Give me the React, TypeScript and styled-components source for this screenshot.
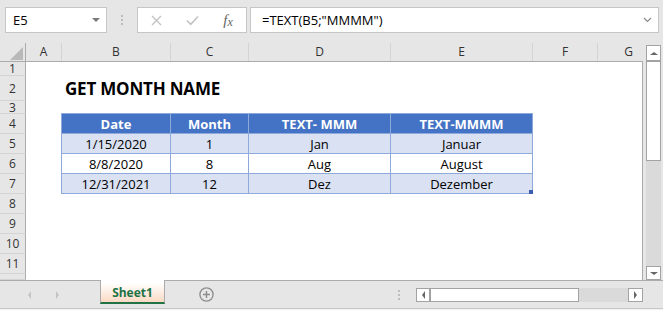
import React from "react";
import styled, { createGlobalStyle } from "styled-components";

const COLS = "26px 36px 109px 78px 142px 142px 65px 62px";
const BORDER = "#ababab";
const HEADER_LINE = "#d4d4d4";
const TABLE_LINE = "#8eaadb";

const GlobalStyle = createGlobalStyle`
  html, body { margin: 0; padding: 0; background: #e6e6e6; }
  body { font-family: "Open Sans", "Liberation Sans", sans-serif; overflow: hidden; }
  * { box-sizing: border-box; }
`;

const Window = styled.div`
  width: 663px;
  height: 310px;
  display: flex;
  flex-direction: column;
  background: #e6e6e6;
  overflow: hidden;
`;

/* ---------- formula bar ---------- */
const FormulaBar = styled.div`
  height: 40px;
  flex: none;
  display: flex;
  align-items: stretch;
  padding: 7px 4px 7px 5px;
`;

const Field = styled.div`
  background: #fff;
  border: 1px solid #c6c6c6;
  display: flex;
  align-items: center;
  font-size: 13px;
  color: #000;
`;

const NameBox = styled(Field)`
  width: 102px;
  padding: 0 6px 0 7px;
  justify-content: space-between;
`;

const DropTriangle = styled.span`
  width: 0;
  height: 0;
  border-left: 4px solid transparent;
  border-right: 4px solid transparent;
  border-top: 4px solid #7a7a7a;
`;

const Divider = styled.div`
  width: 30px;
  display: flex;
  justify-content: center;
  align-items: center;
`;

const DotColumn = styled.div`
  display: flex;
  flex-direction: column;
  gap: 2px;
`;

const Dot = styled.span`
  display: block;
  width: 2px;
  height: 2px;
  background: #bdbdbd;
`;

const FxBox = styled(Field)`
  width: 110px;
  display: grid;
  grid-template-columns: repeat(3, 36px);
  align-items: center;
  justify-items: center;
`;

const Fx = styled.span`
  font-family: "Liberation Serif", serif;
  font-style: italic;
  font-size: 15px;
  color: #666;
  line-height: 1;
`;

const FxSub = styled.span`
  font-size: 12px;
  position: relative;
  top: 1px;
`;

const FormulaInput = styled(Field)`
  flex: 1;
  margin-left: 3px;
  padding: 0 6px 0 11px;
  justify-content: space-between;
`;

/* ---------- sheet ---------- */
const Main = styled.div`
  flex: none;
  height: 240px;
  display: flex;
`;

const Sheet = styled.div`
  width: 643px;
  display: flex;
  flex-direction: column;
  overflow: hidden;
`;

const ColHeaderRow = styled.div`
  flex: none;
  height: 22px;
  padding-top: 3px;
  display: grid;
  grid-template-columns: ${COLS};
  border-bottom: 1px solid ${BORDER};
`;

const CornerCell = styled.div`
  border-right: 1px solid ${BORDER};
  display: flex;
  align-items: flex-end;
  justify-content: flex-end;
  padding: 0 2px 1px 0;
`;

const ColHeaderCell = styled.div`
  border-right: 1px solid ${HEADER_LINE};
  display: flex;
  align-items: center;
  justify-content: center;
  font-size: 12px;
  color: #333;
  line-height: 1;
`;

const Body = styled.div`
  flex: 1;
  display: grid;
  grid-template-columns: ${COLS};
  grid-template-rows: 14px 25px 13px repeat(8, 20px) 6px;
  background: #fff;
  border-right: 1px solid ${BORDER};
  overflow: hidden;
`;

const RowHead = styled.div<{ $row: number }>`
  grid-column: 1;
  grid-row: ${(p) => p.$row};
  background: #e6e6e6;
  border-right: 1px solid ${BORDER};
  border-bottom: 1px solid ${HEADER_LINE};
  display: flex;
  align-items: center;
  justify-content: center;
  font-size: 12px;
  color: #333;
  line-height: 1;
  overflow: hidden;
  padding-top: 1px;
`;

const Title = styled.div`
  grid-column: 3 / span 5;
  grid-row: 2;
  align-self: end;
  padding: 0 0 2px 3px;
  font-weight: 700;
  font-size: 17px;
  line-height: 20px;
  letter-spacing: -0.2px;
  color: #000;
  white-space: nowrap;
`;

const Table = styled.div`
  grid-column: 3 / span 4;
  grid-row: 4 / span 4;
  margin: -1px 0 0 -1px;
  position: relative;
  border-top: 1px solid ${TABLE_LINE};
  border-left: 1px solid ${TABLE_LINE};
  display: grid;
  grid-template-columns: 109px 78px 142px 142px;
  grid-template-rows: repeat(4, 20px);
`;

const TCell = styled.div<{ $kind: "head" | "band" | "plain" }>`
  border-right: 1px solid ${TABLE_LINE};
  border-bottom: 1px solid ${TABLE_LINE};
  display: flex;
  align-items: center;
  justify-content: center;
  padding-top: 1px;
  font-size: 13px;
  line-height: 1;
  white-space: nowrap;
  color: ${(p) => (p.$kind === "head" ? "#fff" : "#000")};
  font-weight: ${(p) => (p.$kind === "head" ? 700 : 400)};
  background: ${(p) =>
    p.$kind === "head" ? "#4472c4" : p.$kind === "band" ? "#d9e1f2" : "#fff"};
`;

const ResizeHandle = styled.span`
  position: absolute;
  right: 0;
  bottom: 0;
  width: 4px;
  height: 4px;
  background: #3b5cb3;
`;

/* ---------- scrollbars ---------- */
const VScroll = styled.div`
  width: 20px;
  padding: 5px 2px 0 3px;
  display: flex;
  flex-direction: column;
`;

const ScrollButton = styled.div<{ $len: number; $horizontal?: boolean }>`
  flex: none;
  ${(p) => (p.$horizontal ? `width: ${p.$len}px;` : `height: ${p.$len}px;`)}
  background: #fff;
  border: 1px solid #a3a3a3;
  display: flex;
  align-items: center;
  justify-content: center;
`;

const Thumb = styled.div<{ $len: number; $horizontal?: boolean }>`
  flex: none;
  ${(p) => (p.$horizontal ? `width: ${p.$len}px;` : `height: ${p.$len}px;`)}
  background: #fff;
  border: 1px solid #a3a3a3;
`;

const Track = styled.div`
  flex: 1;
  background: #dadada;
`;

const Tri = styled.span<{ $dir: "up" | "down" | "left" | "right"; $color: string; $size: number }>`
  width: 0;
  height: 0;
  ${(p) => {
    const s = p.$size;
    const c = p.$color;
    switch (p.$dir) {
      case "up":
        return `border-left:${s}px solid transparent;border-right:${s}px solid transparent;border-bottom:${s - 1}px solid ${c};`;
      case "down":
        return `border-left:${s}px solid transparent;border-right:${s}px solid transparent;border-top:${s - 1}px solid ${c};`;
      case "left":
        return `border-top:${s}px solid transparent;border-bottom:${s}px solid transparent;border-right:${s - 1}px solid ${c};`;
      default:
        return `border-top:${s}px solid transparent;border-bottom:${s}px solid transparent;border-left:${s - 1}px solid ${c};`;
    }
  }}
`;

/* ---------- tab bar ---------- */
const TabBar = styled.div`
  flex: none;
  height: 29px;
  border-top: 1px solid ${BORDER};
  border-bottom: 1px solid #c8c8c8;
  display: flex;
  align-items: center;
`;

const StatusStrip = styled.div`
  flex: none;
  height: 1px;
  background: #f2f2f2;
`;

const NavArrows = styled.div`
  width: 100px;
  padding-left: 15px;
  display: grid;
  grid-template-columns: 28px 28px;
  justify-items: center;
  align-items: center;
`;

const SheetTab = styled.div`
  align-self: flex-start;
  margin-top: -1px;
  width: 65px;
  height: 24px;
  border-left: 1px solid ${BORDER};
  border-right: 1px solid ${BORDER};
  border-bottom: 2px solid #217346;
  background: linear-gradient(to bottom, #ffffff 15%, #fad9c3 100%);
  display: flex;
  align-items: center;
  justify-content: center;
  padding-top: 2px;
  font-size: 12px;
  font-weight: 700;
  color: #217346;
`;

const AddSheet = styled.div`
  margin-left: 34px;
  width: 15px;
  height: 15px;
  display: flex;
`;

const RightGroup = styled.div`
  margin-left: auto;
  margin-right: 20px;
  display: flex;
  align-items: center;
  gap: 16px;
`;

const HScroll = styled.div`
  width: 227px;
  height: 14px;
  display: flex;
`;

const columns = ["A", "B", "C", "D", "E", "F", "G"];
const rows = [1, 2, 3, 4, 5, 6, 7, 8, 9, 10, 11];

const tableHead = ["Date", "Month", "TEXT- MMM", "TEXT-MMMM"];
const tableRows = [
  ["1/15/2020", "1", "Jan", "Januar"],
  ["8/8/2020", "8", "Aug", "August"],
  ["12/31/2021", "12", "Dez", "Dezember"],
];

export default function App() {
  return (
    <Window>
      <GlobalStyle />
      <FormulaBar>
        <NameBox>
          <span>E5</span>
          <DropTriangle />
        </NameBox>
        <Divider>
          <DotColumn>
            <Dot />
            <Dot />
            <Dot />
          </DotColumn>
        </Divider>
        <FxBox>
          <svg width="11" height="11" viewBox="0 0 11 11">
            <path d="M1 1 L10 10 M10 1 L1 10" stroke="#c2c2c2" strokeWidth="1.3" fill="none" />
          </svg>
          <svg width="13" height="11" viewBox="0 0 13 11">
            <path d="M1 5.5 L4.8 9.3 L12 1.5" stroke="#c2c2c2" strokeWidth="1.6" fill="none" />
          </svg>
          <Fx>
            f<FxSub>x</FxSub>
          </Fx>
        </FxBox>
        <FormulaInput>
          <span>=TEXT(B5;"MMMM")</span>
          <svg width="9" height="6" viewBox="0 0 9 6">
            <path d="M1 1 L4.5 4.5 L8 1" stroke="#8a8a8a" strokeWidth="1.2" fill="none" />
          </svg>
        </FormulaInput>
      </FormulaBar>

      <Main>
        <Sheet>
          <ColHeaderRow>
            <CornerCell>
              <svg width="13" height="13" viewBox="0 0 13 13">
                <path d="M13 0 L13 13 L0 13 Z" fill="#b9b9b9" />
              </svg>
            </CornerCell>
            {columns.map((c) => (
              <ColHeaderCell key={c}>{c}</ColHeaderCell>
            ))}
          </ColHeaderRow>
          <Body>
            {rows.map((r) => (
              <RowHead key={r} $row={r}>
                {r}
              </RowHead>
            ))}
            <RowHead $row={12} />
            <Title>GET MONTH NAME</Title>
            <Table>
              {tableHead.map((h) => (
                <TCell key={h} $kind="head">
                  {h}
                </TCell>
              ))}
              {tableRows.map((row, i) =>
                row.map((v, j) => (
                  <TCell key={`${i}-${j}`} $kind={i % 2 === 0 ? "band" : "plain"}>
                    {v}
                  </TCell>
                ))
              )}
              <ResizeHandle />
            </Table>
          </Body>
        </Sheet>
        <VScroll>
          <ScrollButton $len={16}>
            <Tri $dir="up" $color="#666" $size={4} />
          </ScrollButton>
          <Thumb $len={100} />
          <Track />
          <ScrollButton $len={14}>
            <Tri $dir="down" $color="#666" $size={4} />
          </ScrollButton>
        </VScroll>
      </Main>

      <TabBar>
        <NavArrows>
          <Tri $dir="left" $color="#c4c4c4" $size={4} />
          <Tri $dir="right" $color="#c4c4c4" $size={4} />
        </NavArrows>
        <SheetTab>Sheet1</SheetTab>
        <AddSheet>
          <svg width="15" height="15" viewBox="0 0 15 15">
            <circle cx="7.5" cy="7.5" r="6.6" stroke="#8c8c8c" strokeWidth="1.3" fill="none" />
            <path d="M7.5 4 V11 M4 7.5 H11" stroke="#8c8c8c" strokeWidth="1.4" />
          </svg>
        </AddSheet>
        <RightGroup>
          <DotColumn>
            <Dot />
            <Dot />
            <Dot />
          </DotColumn>
          <HScroll>
            <ScrollButton $len={14} $horizontal>
              <Tri $dir="left" $color="#666" $size={4} />
            </ScrollButton>
            <Thumb $len={149} $horizontal />
            <Track />
            <ScrollButton $len={15} $horizontal>
              <Tri $dir="right" $color="#666" $size={4} />
            </ScrollButton>
          </HScroll>
        </RightGroup>
      </TabBar>
      <StatusStrip />
    </Window>
  );
}
